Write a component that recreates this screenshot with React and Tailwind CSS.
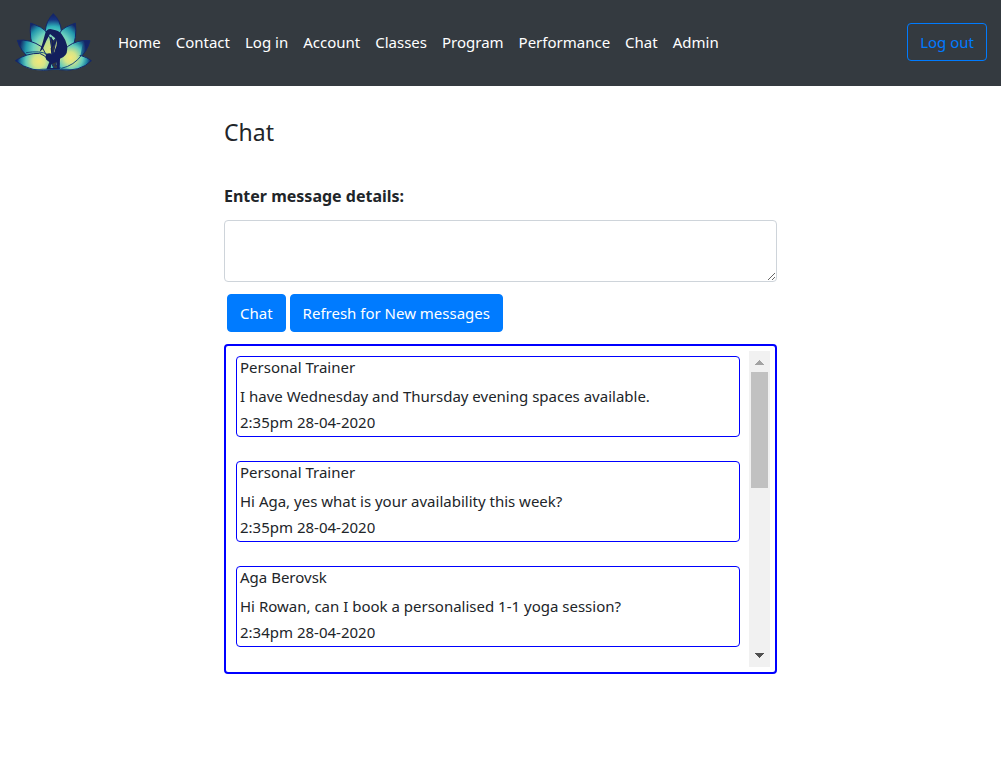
import React from "react";

const links = ["Home", "Contact", "Log in", "Account", "Classes", "Program", "Performance", "Chat", "Admin"];

const messages = [
  { author: "Personal Trainer", text: "I have Wednesday and Thursday evening spaces available.", time: "2:35pm 28-04-2020" },
  { author: "Personal Trainer", text: "Hi Aga, yes what is your availability this week?", time: "2:35pm 28-04-2020" },
  { author: "Aga Berovsk", text: "Hi Rowan, can I book a personalised 1-1 yoga session?", time: "2:34pm 28-04-2020" },
];

function Logo() {
  return (
    <svg viewBox="45 38 231 174" className="h-[58px] w-[77px] shrink-0" aria-hidden="true">
      <defs>
        <radialGradient id="petalTop" gradientUnits="userSpaceOnUse" cx="160" cy="130" r="92">
          <stop offset="0" stopColor="#a9dc9c" />
          <stop offset="0.3" stopColor="#7ad6c4" />
          <stop offset="0.56" stopColor="#2fb2ba" />
          <stop offset="0.78" stopColor="#16357f" />
          <stop offset="1" stopColor="#131c60" />
        </radialGradient>
        <radialGradient id="petalMid" gradientUnits="userSpaceOnUse" cx="158" cy="152" r="116">
          <stop offset="0" stopColor="#e8ea7c" />
          <stop offset="0.25" stopColor="#c4e08c" />
          <stop offset="0.5" stopColor="#6cd1bf" />
          <stop offset="0.7" stopColor="#2196ac" />
          <stop offset="0.86" stopColor="#152567" />
        </radialGradient>
        <radialGradient id="petalLeft" gradientUnits="userSpaceOnUse" cx="117" cy="183" r="72">
          <stop offset="0" stopColor="#f3e77a" />
          <stop offset="0.25" stopColor="#d6e588" />
          <stop offset="0.55" stopColor="#62cbbc" />
          <stop offset="0.74" stopColor="#2187a3" />
          <stop offset="0.92" stopColor="#142166" />
        </radialGradient>
        <radialGradient id="petalRight" gradientUnits="userSpaceOnUse" cx="211" cy="172" r="68">
          <stop offset="0" stopColor="#f3e77a" />
          <stop offset="0.25" stopColor="#d6e588" />
          <stop offset="0.55" stopColor="#62cbbc" />
          <stop offset="0.74" stopColor="#2187a3" />
          <stop offset="0.92" stopColor="#142166" />
        </radialGradient>
      </defs>
      <g stroke="#14286a" strokeWidth="3" strokeLinejoin="round">
        <path fill="url(#petalMid)" d="M92 68Q122 76 148 100L158 165L105 158Q86 114 92 68Z" />
        <path fill="url(#petalMid)" d="M226 68Q197 77 172 99L160 160L214 154Q232 112 226 68Z" />
        <path fill="url(#petalTop)" d="M160 40Q138 62 136 91Q144 108 160 122Q176 108 184 91Q182 62 160 40Z" />
        <path fill="url(#petalMid)" d="M52 120Q90 115 126 140L158 200L94 177Q61 154 52 120Z" />
        <path fill="url(#petalMid)" d="M270 121Q232 117 202 139L165 195L238 174Q262 153 270 121Z" />
        <path fill="url(#petalRight)" d="M274 181Q247 160 210 164Q188 176 177 208Q241 216 274 181Z" />
        <path fill="url(#petalRight)" d="M249 126Q208 128 190 160L174 203Q224 191 242 162Z" stroke="none" />
        <path fill="url(#petalLeft)" d="M46 181Q80 158 119 159Q147 170 164 207Q93 220 46 181Z" />
      </g>
      <path d="M78 157Q119 150 143 162M184 204Q222 196 246 163" fill="none" stroke="#17507d" strokeWidth="3" />
      <path d="M92 208Q164 201 235 208Z" fill="#19517d" />
      <path d="M119 154L127 130L136 98Q139 87 151 86L167 90Q181 94 188 106Q198 119 201 135Q205 161 190 170L180 175L179 205H171L171 184L154 192L152 203L176 202V207H139L148 185L139 178Q134 168 140 161Q149 156 157 163Q165 156 166 145Q175 130 166 114L150 101L139 121L128 147Z" fill="#131f5c" />
      <path d="M152 110L158 122V138L154 144L156 162M159 136L168 120" fill="none" stroke="#131f5c" strokeWidth="4" />
    </svg>
  );
}

function Scrollbar() {
  return (
    <div className="flex w-[21px] shrink-0 flex-col items-center bg-[#f1f1f1]" aria-hidden="true">
      <svg viewBox="0 0 21 21" className="h-[21px] w-[21px]" shapeRendering="crispEdges">
        <path d="M6 14L10.5 9L15 14Z" fill="#a3a3a3" />
      </svg>
      <div className="h-[116px] w-[17px] bg-[#c1c1c1]" />
      <svg viewBox="0 0 21 21" className="mt-auto h-[21px] w-[21px]" shapeRendering="crispEdges">
        <path d="M6 7L10.5 12L15 7Z" fill="#505050" />
      </svg>
    </div>
  );
}

export default function App() {
  return (
    <div className="min-h-screen bg-white font-['Tahoma','Noto_Sans',sans-serif] text-[15px] text-[#212529]">
      <header className="flex min-h-[86px] items-center bg-[#343a40] pr-[14px] pb-[2px] pl-[15px]">
        <a href="#home" aria-label="Home" className="mr-[26px]">
          <Logo />
        </a>
        <nav className="flex flex-1 flex-wrap gap-x-[15px]">
          {links.map((link) => (
            <a key={link} href={"#" + link} className="py-2 leading-6 text-white">
              {link}
            </a>
          ))}
        </nav>
        <button type="button" className="h-[38px] shrink-0 rounded border border-[#007bff] px-3 leading-6 text-[#007bff]">
          Log out
        </button>
      </header>

      <main className="mx-auto w-full max-w-[553px] pt-8">
        <h1 className="text-[23px] leading-7">Chat</h1>
        <form onSubmit={(e) => e.preventDefault()}>
          <label htmlFor="message" className="mt-9 block text-base leading-7 font-bold">
            Enter message details:
          </label>
          <textarea id="message" className="mt-[10px] block h-[62px] w-full resize rounded border border-[#ced4da] px-3 py-1.5" />
          <div className="mt-3 flex gap-1 pl-[3px]">
            <button type="submit" className="h-[38px] rounded border border-[#007bff] bg-[#007bff] px-3 leading-6 text-white">
              Chat
            </button>
            <button type="button" className="h-[38px] rounded border border-[#007bff] bg-[#007bff] px-3 leading-6 text-white">
              Refresh for New messages
            </button>
          </div>
        </form>

        <section className="mt-3 flex h-[330px] rounded border-2 border-[#0000ff] p-[5px]">
          <ul className="flex min-w-0 flex-1 flex-col gap-6 overflow-y-auto pt-[5px] pr-[9px] pl-[5px] [scrollbar-width:none]">
            {messages.map((m) => (
              <li key={m.text} className="rounded border border-[#0000ff] px-[3px] pb-px">
                <h2 className="mb-1.5 leading-5">{m.author}</h2>
                <p className="leading-[26px]">{m.text}</p>
                <p className="leading-[26px]">{m.time}</p>
              </li>
            ))}
          </ul>
          <Scrollbar />
        </section>
      </main>
    </div>
  );
}
